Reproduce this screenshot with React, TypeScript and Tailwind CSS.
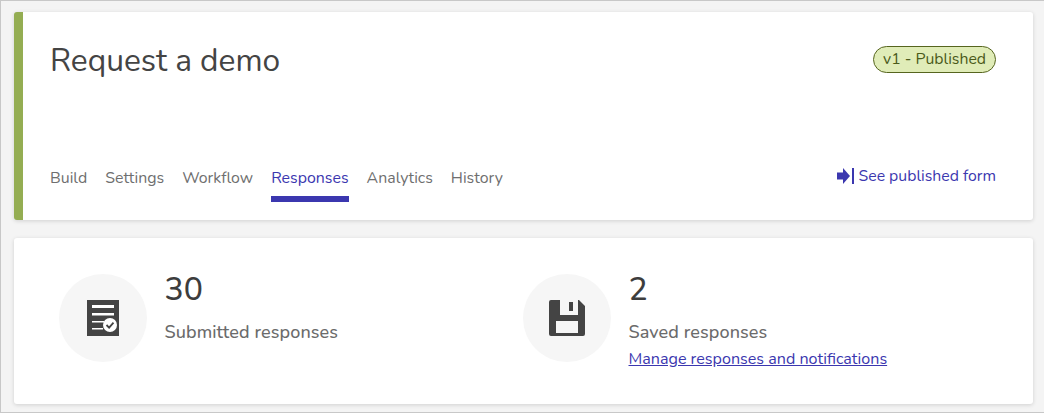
import { useState } from "react";

const tabs = ["Build", "Settings", "Workflow", "Responses", "Analytics", "History"];

function ReportIcon() {
  return (
    <svg width="32" height="36" viewBox="0 0 32 36">
      <rect width="32" height="36" fill="#444444" />
      <rect x="5" y="5" width="22" height="3" fill="#ffffff" />
      <rect x="5" y="13" width="22" height="2.5" fill="#ffffff" />
      <rect x="5" y="21" width="12" height="1.5" fill="#ffffff" />
      <rect x="5" y="28" width="11" height="1.5" fill="#ffffff" />
      <circle cx="23" cy="25" r="7" fill="#ffffff" />
      <path d="M19.5 25l2.6 2.6 4.4-5" fill="none" stroke="#444444" strokeWidth="1.8" />
    </svg>
  );
}

function SaveIcon() {
  return (
    <svg width="36" height="36" viewBox="0 0 36 36">
      <path
        fillRule="evenodd"
        fill="#444444"
        d="M2 0h28l6 6v28a2 2 0 0 1-2 2H2a2 2 0 0 1-2-2V2a2 2 0 0 1 2-2zM11 0v15h18V0zM20 2h4v9h-4zM7 21v12h22V21z"
      />
    </svg>
  );
}

function ArrowIcon() {
  return (
    <svg width="17" height="16" viewBox="0 0 17 16" className="shrink-0">
      <path d="M0 4.5h6V0l7 8-7 8v-4.5H0z" fill="#3b37af" />
      <rect x="15" y="0" width="2" height="16" fill="#3b37af" />
    </svg>
  );
}

function Stat({
  icon,
  value,
  label,
  link,
}: {
  icon: React.ReactNode;
  value: string;
  label: string;
  link?: string;
}) {
  return (
    <div className="flex gap-x-[17.5px]">
      <div className="w-[88px] h-[88px] rounded-full bg-[#f6f6f6] flex items-center justify-center shrink-0">
        {icon}
      </div>
      <div className="flex flex-col">
        <div className="text-[32px] leading-[32px] text-[#3d3d3d] font-medium">{value}</div>
        <div className="text-[18px] tracking-[0.1px] leading-[24px] text-[#6b6b6b] mt-[14px] font-medium">{label}</div>
        {link && (
          <a href="#" className="text-[16.1px] leading-[20px] text-[#3b37af] underline mt-[5px]">
            {link}
          </a>
        )}
      </div>
    </div>
  );
}

export default function App() {
  const [active] = useState("Responses");

  return (
    <div className="w-[1044px] h-[413px] overflow-hidden bg-[#f4f4f4] border-t border-l border-b border-[#c8c8c8] pt-[11px] pl-[13px] pr-[11px] font-['Nunito','Noto_Sans','Open_Sans',sans-serif]">
      <div className="h-[208px] bg-white rounded-[3px] border-l-[9px] border-[#94ad52] shadow-[0_1px_4px_rgba(0,0,0,0.15)] pl-[27px] pr-[37px] pt-[30px] pb-[18px] flex flex-col">
        <div className="flex items-start justify-between">
          <h1 className="text-[31.7px] leading-[38px] text-[#444444]">Request a demo</h1>
          <span className="mt-[4px] h-[27px] px-[9px] pt-px flex items-center rounded-full bg-[#e0ecb8] border border-[#56651f] text-[15.8px] text-[#4a5a1a]">
            v1 - Published
          </span>
        </div>
        <div className="mt-auto flex items-start justify-between">
          <div className="flex gap-x-[18px]">
            {tabs.map((tab) => (
              <div
                key={tab}
                className={
                  tab === active
                    ? "h-[37px] pt-px text-[15.9px] leading-[24px] text-[#3b37af] border-b-[6px] border-[#3b37af]"
                    : "h-[37px] pt-px text-[15.9px] leading-[24px] text-[#6f6f6f]"
                }
              >
                {tab}
              </div>
            ))}
          </div>
          <a href="#" className="mt-px flex items-center gap-x-[5px] text-[15.8px] leading-[20px] text-[#3b37af]">
            <ArrowIcon />
            See published form
          </a>
        </div>
      </div>

      <div className="mt-[18px] h-[166px] bg-white rounded-[3px] shadow-[0_1px_4px_rgba(0,0,0,0.15)] pl-[45px] pt-[36px] grid grid-cols-[464px_1fr]">
        <Stat icon={<ReportIcon />} value="30" label="Submitted responses" />
        <Stat
          icon={<SaveIcon />}
          value="2"
          label="Saved responses"
          link="Manage responses and notifications"
        />
      </div>
    </div>
  );
}
